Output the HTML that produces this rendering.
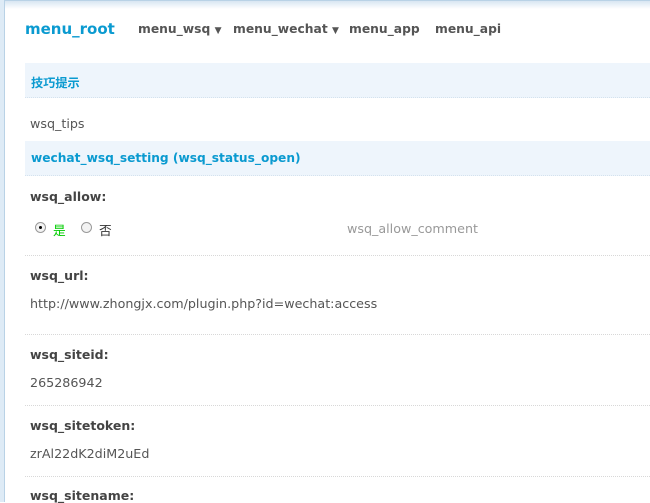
<!DOCTYPE html>
<html><head><meta charset="utf-8"><style>
*{margin:0;padding:0;box-sizing:border-box}
body{width:650px;height:502px;overflow:hidden;background:#fff;font-family:"DejaVu Sans",Verdana,"Noto Sans CJK SC",sans-serif;font-size:12.7px;color:#555;position:relative}
.lb{position:absolute;left:0;top:0;width:5px;height:502px;background:#deebf6;border-right:1px solid #b9d2e6}
.tb{position:absolute;left:5px;top:0;right:0;height:9px;background:linear-gradient(#d8e6f2,#fff);border-top:1px solid #b9d2e6}
.a{position:absolute;white-space:nowrap}
.nav{top:22px;font-weight:bold;color:#555;font-size:12.3px}
.hd{position:absolute;left:25px;right:0;height:35px;background:#eef5fc;border-bottom:1px dotted #d4e2ee;color:#0a9ad0;font-weight:bold;font-size:12.2px;padding:10px 0 0 6px}
.dl{position:absolute;left:25px;right:0;border-top:1px dotted #d8d8d8}
.lbl{font-weight:bold;color:#444;font-size:12.5px}
.r{display:inline-block;width:11px;height:11px;border-radius:50%;border:1px solid #999;background:#f3f3f3;position:absolute}
</style></head><body>
<div class="lb"></div><div class="tb"></div>
<div class="a" style="left:25px;top:20px;font-size:15px;font-weight:bold;color:#0a9ad0">menu_root</div>
<div class="a nav" style="left:138px">menu_wsq <span style="font-size:9px">▼</span></div>
<div class="a nav" style="left:233px">menu_wechat <span style="font-size:9px">▼</span></div>
<div class="a nav" style="left:349px">menu_app</div>
<div class="a nav" style="left:435px">menu_api</div>
<div class="hd" style="top:63px">技巧提示</div>
<div class="a" style="left:30px;top:116px">wsq_tips</div>
<div class="hd" style="top:141px">wechat_wsq_setting (wsq_status_open)</div>
<div class="a lbl" style="left:30px;top:189px">wsq_allow:</div>
<span class="r" style="left:35px;top:222px"><span style="position:absolute;left:3px;top:3px;width:3px;height:3px;background:#000;border-radius:50%"></span></span>
<div class="a" style="left:53px;top:220px;color:#0c0">是</div>
<span class="r" style="left:81px;top:222px"></span>
<div class="a" style="left:99px;top:220px;color:#333">否</div>
<div class="a" style="left:347px;top:221px;color:#999">wsq_allow_comment</div>
<div class="dl" style="top:255px"></div>
<div class="a lbl" style="left:30px;top:268px">wsq_url:</div>
<div class="a" style="left:30px;top:296px">http://www.zhongjx.com/plugin.php?id=wechat:access</div>
<div class="dl" style="top:334px"></div>
<div class="a lbl" style="left:30px;top:347px">wsq_siteid:</div>
<div class="a" style="left:30px;top:375px">265286942</div>
<div class="dl" style="top:405px"></div>
<div class="a lbl" style="left:30px;top:418px">wsq_sitetoken:</div>
<div class="a" style="left:30px;top:446px">zrAl22dK2diM2uEd</div>
<div class="dl" style="top:476px"></div>
<div class="a lbl" style="left:30px;top:488px">wsq_sitename:</div>
</body></html>
